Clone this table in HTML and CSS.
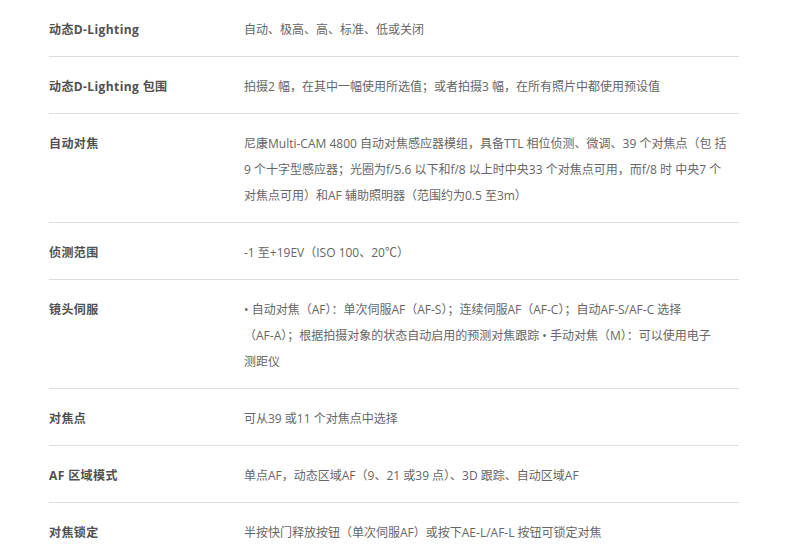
FILE: index.html
```html
<!DOCTYPE html>
<html lang="zh-CN">
<head>
<meta charset="utf-8">
<title>规格</title>
<link rel="stylesheet" href="styles.css">
</head>
<body>
<div class="specs">
  <div class="spec-row">
    <div class="spec-label">动态D-Lighting</div>
    <div class="spec-value">自动、极高、高、标准、低或关闭</div>
  </div>
  <div class="spec-row">
    <div class="spec-label">动态D-Lighting 包围</div>
    <div class="spec-value">拍摄2 幅，在其中一幅使用所选值；或者拍摄3 幅，在所有照片中都使用预设值</div>
  </div>
  <div class="spec-row">
    <div class="spec-label">自动对焦</div>
    <div class="spec-value">尼康Multi-CAM 4800 自动对焦感应器模组，具备TTL 相位侦测、微调、39 个对焦点（包 括<br>9 个十字型感应器；光圈为f/5.6 以下和f/8 以上时中央33 个对焦点可用，而f/8 时 中央7 个<br>对焦点可用）和AF 辅助照明器（范围约为0.5 至3m）</div>
  </div>
  <div class="spec-row">
    <div class="spec-label">侦测范围</div>
    <div class="spec-value">-1 至+19EV（ISO 100、20℃）</div>
  </div>
  <div class="spec-row">
    <div class="spec-label">镜头伺服</div>
    <div class="spec-value">• 自动对焦（AF）：单次伺服AF（AF-S）；连续伺服AF（AF-C）；自动AF-S/AF-C 选择<br>（AF-A）；根据拍摄对象的状态自动启用的预测对焦跟踪 • 手动对焦（M）：可以使用电子<br>测距仪</div>
  </div>
  <div class="spec-row">
    <div class="spec-label">对焦点</div>
    <div class="spec-value">可从39 或11 个对焦点中选择</div>
  </div>
  <div class="spec-row">
    <div class="spec-label">AF 区域模式</div>
    <div class="spec-value">单点AF，动态区域AF（9、21 或39 点）、3D 跟踪、自动区域AF</div>
  </div>
  <div class="spec-row">
    <div class="spec-label">对焦锁定</div>
    <div class="spec-value">半按快门释放按钮（单次伺服AF）或按下AE-L/AF-L 按钮可锁定对焦</div>
  </div>
</div>
</body>
</html>
```

FILE: styles.css
```css
html, body {
  margin: 0;
  padding: 0;
  background: #fff;
}

body {
  font-family: "Open Sans", "Noto Sans CJK SC", sans-serif;
  font-size: 12px;
  color: #666;
}

.specs {
  margin-left: 49px;
  width: 690px;
}

.spec-row {
  display: grid;
  grid-template-columns: 195px 1fr;
  padding: 17px 0 13px;
  border-bottom: 1px solid #ddd;
  line-height: 26px;
}

.spec-label {
  font-weight: bold;
  color: #505050;
  letter-spacing: 0.4px;
  white-space: nowrap;
}

.spec-value {
  color: #666;
  white-space: nowrap;
}
```
